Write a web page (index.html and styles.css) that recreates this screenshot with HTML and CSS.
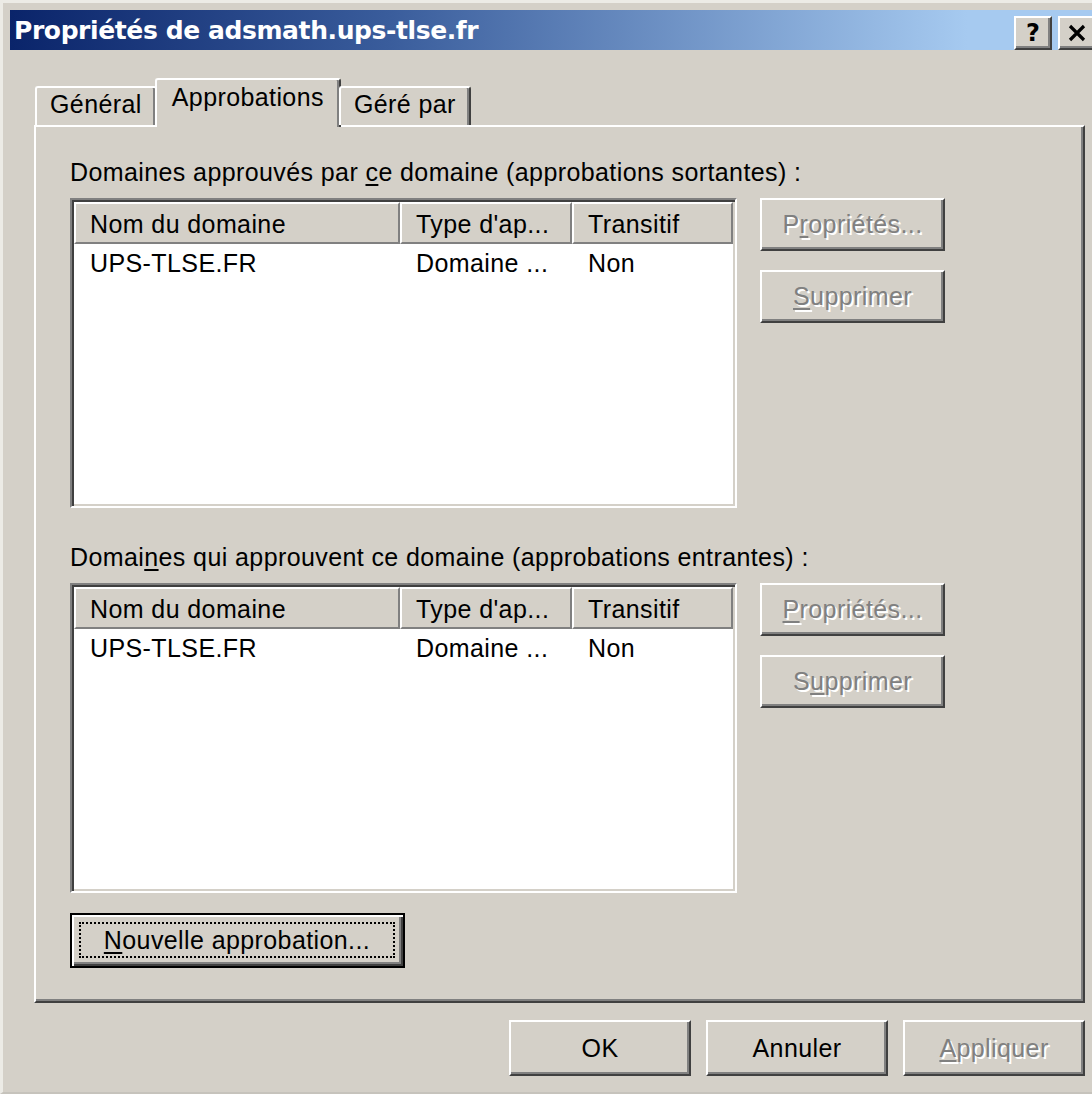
FILE: index.html
```html
<!DOCTYPE html>
<html lang="fr">
<head>
<meta charset="utf-8">
<title>Propriétés de adsmath.ups-tlse.fr</title>
<link rel="stylesheet" href="styles.css">
</head>
<body>
<div class="window">
  <div class="titlebar">
    <span class="title">Propriétés de adsmath.ups-tlse.fr</span>
    <div class="caption-btns">
      <span class="cbtn help">?</span>
      <span class="cbtn close">
        <svg viewBox="0 0 20 18" width="20" height="18"><path d="M3 2 L17 16 M17 2 L3 16" stroke="#000" stroke-width="3.2" fill="none"/></svg>
      </span>
    </div>
  </div>

  <div class="content">
    <div class="tabs">
      <div class="tab">Général</div>
      <div class="tab active">Approbations</div>
      <div class="tab">Géré par</div>
    </div>

    <div class="page">
      <section class="group">
        <div class="label">Domaines approuvés par <u>c</u>e domaine (approbations sortantes) :</div>
        <div class="group-row">
          <div class="listview">
            <div class="lv-head">
              <div class="hcell c1">Nom du domaine</div>
              <div class="hcell c2">Type d'ap...</div>
              <div class="hcell c3">Transitif</div>
            </div>
            <div class="lv-row">
              <span class="cell c1">UPS-TLSE.FR</span>
              <span class="cell c2">Domaine ...</span>
              <span class="cell c3">Non</span>
            </div>
          </div>
          <div class="side-btns">
            <div class="btn disabled">P<u>r</u>opriétés...</div>
            <div class="btn disabled"><u>S</u>upprimer</div>
          </div>
        </div>
      </section>

      <section class="group second">
        <div class="label">Domai<u>n</u>es qui approuvent ce domaine (approbations entrantes) :</div>
        <div class="group-row">
          <div class="listview">
            <div class="lv-head">
              <div class="hcell c1">Nom du domaine</div>
              <div class="hcell c2">Type d'ap...</div>
              <div class="hcell c3">Transitif</div>
            </div>
            <div class="lv-row">
              <span class="cell c1">UPS-TLSE.FR</span>
              <span class="cell c2">Domaine ...</span>
              <span class="cell c3">Non</span>
            </div>
          </div>
          <div class="side-btns">
            <div class="btn disabled"><u>P</u>ropriétés...</div>
            <div class="btn disabled">S<u>u</u>pprimer</div>
          </div>
        </div>
      </section>

      <div class="btn default new-trust"><span class="focus"><u>N</u>ouvelle approbation...</span></div>
    </div>

    <div class="footer">
      <div class="btn">OK</div>
      <div class="btn">Annuler</div>
      <div class="btn disabled"><u>A</u>ppliquer</div>
    </div>
  </div>
</div>
</body>
</html>
```

FILE: styles.css
```css
html, body {
  margin: 0;
  background: #ffffff;
  overflow: hidden;
}

body {
  font-family: "Liberation Sans", Arial, sans-serif;
  font-size: 25px;
  letter-spacing: 0.4px;
  color: #000;
}

u {
  text-decoration: underline;
  text-decoration-thickness: 2px;
  text-underline-offset: 3px;
}

/* window frame */
.window {
  width: 1104px;
  height: 1094px;
  box-sizing: border-box;
  background: #d4d0c8;
  border-top: 3px solid #ecebe6;
  border-left: 3px solid #ecebe6;
  border-bottom: 2px solid #c6c3bc;
  padding: 7px 6px 0 7px;
}

/* caption */
.titlebar {
  height: 40px;
  display: flex;
  align-items: center;
  background: linear-gradient(90deg, #0a246a 0%, #3a5d9c 35%, #a6caf0 88%, #a6caf0 100%);
  padding: 0 2px 0 4px;
}

.title {
  font-family: "DejaVu Sans", "Liberation Sans", sans-serif;
  font-weight: bold;
  font-size: 25px;
  letter-spacing: -0.4px;
  color: #fff;
}

.caption-btns {
  margin-left: auto;
  display: flex;
  gap: 6px;
  margin-top: 6px;
}

.cbtn {
  width: 38px;
  height: 34px;
  box-sizing: border-box;
  display: flex;
  align-items: center;
  justify-content: center;
  background: #d4d0c8;
  border: 2px solid;
  border-color: #fff #404040 #404040 #fff;
  box-shadow: inset -2px -2px 0 #808080;
}

.cbtn.help {
  font-family: "DejaVu Sans", sans-serif;
  font-weight: bold;
  font-size: 24px;
  letter-spacing: 0;
}

/* client area */
.content {
  padding: 28px 13px 0 24px;
}

.tabs {
  display: flex;
  align-items: flex-end;
  padding-left: 1px;
  height: 47px;
  position: relative;
  z-index: 1;
}

.tab {
  height: 39px;
  box-sizing: border-box;
  padding: 1px 13px 0;
  background: #d4d0c8;
  border-top: 2px solid #fff;
  border-left: 2px solid #fff;
  border-right: 2px solid #404040;
  box-shadow: inset -2px 0 0 #808080;
  border-radius: 3px 3px 0 0;
  line-height: 30px;
}

.tab.active {
  height: 49px;
  margin: 0 -2px -2px;
  padding: 2px 15px 0;
  line-height: 30px;
  border-bottom: none;
}

.page {
  height: 878px;
  box-sizing: border-box;
  border: 2px solid;
  border-color: #fff #404040 #404040 #fff;
  box-shadow: inset -2px -2px 0 #808080;
  padding: 31px 0 0 34px;
}

.label {
  line-height: 28px;
  height: 28px;
  margin-bottom: 12px;
  white-space: nowrap;
}

.group.second {
  margin-top: 35px;
}

.group-row {
  display: flex;
  gap: 23px;
  align-items: flex-start;
}

/* list view */
.listview {
  width: 667px;
  height: 310px;
  box-sizing: border-box;
  background: #fff;
  border: 2px solid;
  border-color: #808080 #fff #fff #808080;
  box-shadow: inset 2px 2px 0 #404040, inset -2px -2px 0 #d4d0c8;
  padding: 2px;
}

.lv-head {
  display: flex;
  height: 42px;
}

.hcell {
  box-sizing: border-box;
  background: #d4d0c8;
  border: 2px solid;
  border-color: #fff #808080 #808080 #fff;
  padding-left: 14px;
  line-height: 40px;
  white-space: nowrap;
  overflow: hidden;
}

.c1 { width: 326px; }
.c2 { width: 172px; }
.c3 { width: 161px; }

.lv-row {
  display: flex;
  height: 40px;
  line-height: 38px;
}

.cell {
  box-sizing: border-box;
  padding-left: 16px;
  white-space: nowrap;
}

/* push buttons */
.side-btns {
  display: flex;
  flex-direction: column;
  gap: 19px;
}

.btn {
  box-sizing: border-box;
  background: #d4d0c8;
  border: 2px solid;
  border-color: #fff #404040 #404040 #fff;
  box-shadow: inset -2px -2px 0 #808080;
  display: flex;
  align-items: center;
  justify-content: center;
  white-space: nowrap;
}

.side-btns .btn {
  width: 185px;
  height: 53px;
}

.btn.disabled {
  color: #808080;
  text-shadow: 2px 2px 0 #fff;
}

.btn.default {
  border: 2px solid #000;
  box-shadow: inset 2px 2px 0 #fff, inset -2px -2px 0 #404040, inset -4px -4px 0 #808080;
}

.new-trust {
  width: 335px;
  height: 55px;
  margin-top: 20px;
  padding: 7px 8px 8px 7px;
}

.focus {
  flex: 1;
  align-self: stretch;
  display: flex;
  align-items: center;
  justify-content: center;
  border: 2px dotted #000;
}

.footer {
  display: flex;
  justify-content: flex-end;
  gap: 15px;
  padding-top: 17px;
}

.footer .btn {
  width: 182px;
  height: 56px;
}
```
